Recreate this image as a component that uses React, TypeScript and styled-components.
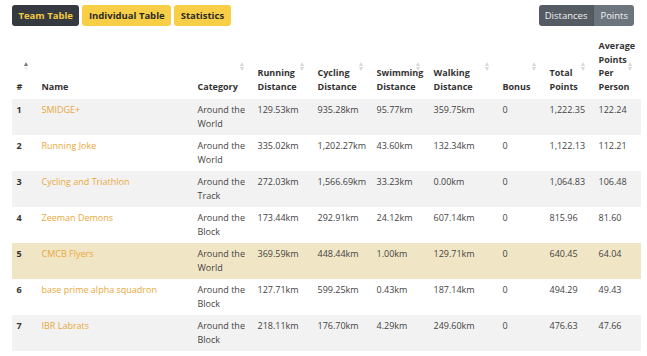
import React from "react";
import styled, { createGlobalStyle } from "styled-components";

const Global = createGlobalStyle`
  html, body { margin: 0; padding: 0; background: #fff; }
  body { font-family: "Open Sans", "Liberation Sans", sans-serif; color: #333; overflow: hidden; }
`;

const Page = styled.div`
  width: 647px;
  height: 356px;
  overflow: hidden;
  padding: 4px 0 0 12px;
  box-sizing: border-box;
`;

const Toolbar = styled.div`
  display: flex;
  justify-content: space-between;
  align-items: center;
  padding-right: 13px;
  height: 22px;
`;

const Group = styled.div`
  display: flex;
  gap: 3px;
`;

const TabButton = styled.button<{ $active?: boolean }>`
  height: 21px;
  padding: 0 6.5px;
  border: none;
  border-radius: 3px;
  font-family: "Open Sans", sans-serif;
  font-weight: 700;
  font-size: 9.5px;
  background: ${(p) => (p.$active ? "#343a40" : "#f7ce46")};
  color: ${(p) => (p.$active ? "#f3c944" : "#2b2b2b")};
  cursor: pointer;
`;

const Segmented = styled.div`
  display: flex;
  border-radius: 3px;
  overflow: hidden;
`;

const SegButton = styled.button<{ $active?: boolean }>`
  height: 21px;
  padding: 0 6px;
  border: none;
  font-family: "Open Sans", sans-serif;
  font-size: 9.5px;
  background: ${(p) => (p.$active ? "#545b62" : "#6c757d")};
  color: #f1f1f1;
  & + & { border-left: 1px solid #4e555b; }
`;

const Table = styled.table`
  margin-top: 8px;
  width: 629px;
  table-layout: fixed;
  border-collapse: collapse;
  font-size: 9px;
  line-height: 13.5px;
`;

const Col = styled.col<{ $w: number }>`
  width: ${(p) => p.$w}px;
`;

const Th = styled.th`
  position: relative;
  text-align: left;
  vertical-align: bottom;
  font-weight: 700;
  color: #333;
  padding: 5px 12px 5.5px 4.5px;
`;

const SortIcon = styled.span<{ $asc?: boolean }>`
  position: absolute;
  right: 8px;
  top: 50%;
  transform: translateY(-50%);
  width: 6px;
  height: 10px;
  display: flex;
  flex-direction: column;
  align-items: center;
  justify-content: center;
  gap: 1px;
  &::before, &::after {
    content: "";
    width: 0;
    height: 0;
    border-left: 2.5px solid transparent;
    border-right: 2.5px solid transparent;
  }
  &::before {
    border-bottom: 4px solid ${(p) => (p.$asc ? "#777" : "#d8d8d8")};
  }
  &::after {
    border-top: 4px solid ${(p) => (p.$asc ? "#eee" : "#d8d8d8")};
  }
`;

const Tr = styled.tr<{ $stripe?: boolean; $highlight?: boolean }>`
  background: ${(p) => (p.$highlight ? "#f0e6c6" : p.$stripe ? "#f2f2f2" : "#fff")};
`;

const Td = styled.td`
  vertical-align: top;
  padding: 4.5px 4.5px;
  height: 27px;
  color: #444;
`;

const RankCell = styled(Td)`
  font-weight: 700;
  color: #333;
`;

const NameLink = styled.a`
  color: #e9a83a;
  text-decoration: none;
`;

const columns: { label: React.ReactNode; w: number; asc?: boolean; sortable?: boolean }[] = [
  { label: "#", w: 25, asc: true, sortable: true },
  { label: "Name", w: 156, sortable: false },
  { label: "Category", w: 60, sortable: true },
  { label: <>Running<br />Distance</>, w: 60, sortable: true },
  { label: <>Cycling<br />Distance</>, w: 59, sortable: true },
  { label: <>Swimming<br />Distance</>, w: 57, sortable: true },
  { label: <>Walking<br />Distance</>, w: 69, sortable: true },
  { label: "Bonus", w: 47, sortable: true },
  { label: <>Total<br />Points</>, w: 49, sortable: true },
  { label: <>Average<br />Points<br />Per<br />Person</>, w: 47, sortable: true },
];

const rows = [
  ["1", "SMIDGE+", "World", "129.53km", "935.28km", "95.77km", "359.75km", "0", "1,222.35", "122.24"],
  ["2", "Running Joke", "World", "335.02km", "1,202.27km", "43.60km", "132.34km", "0", "1,122.13", "112.21"],
  ["3", "Cycling and Triathlon", "Track", "272.03km", "1,566.69km", "33.23km", "0.00km", "0", "1,064.83", "106.48"],
  ["4", "Zeeman Demons", "Block", "173.44km", "292.91km", "24.12km", "607.14km", "0", "815.96", "81.60"],
  ["5", "CMCB Flyers", "World", "369.59km", "448.44km", "1.00km", "129.71km", "0", "640.45", "64.04"],
  ["6", "base prime alpha squadron", "Block", "127.71km", "599.25km", "0.43km", "187.14km", "0", "494.29", "49.43"],
  ["7", "IBR Labrats", "Block", "218.11km", "176.70km", "4.29km", "249.60km", "0", "476.63", "47.66"],
];

export default function App() {
  return (
    <Page>
      <Global />
      <Toolbar>
        <Group>
          <TabButton $active>Team Table</TabButton>
          <TabButton>Individual Table</TabButton>
          <TabButton>Statistics</TabButton>
        </Group>
        <Segmented>
          <SegButton $active>Distances</SegButton>
          <SegButton>Points</SegButton>
        </Segmented>
      </Toolbar>
      <Table>
        <colgroup>
          {columns.map((c, i) => (
            <Col key={i} $w={c.w} />
          ))}
        </colgroup>
        <thead>
          <tr>
            {columns.map((c, i) => (
              <Th key={i}>
                {c.label}
                {c.sortable && <SortIcon $asc={c.asc} />}
              </Th>
            ))}
          </tr>
        </thead>
        <tbody>
          {rows.map((r, i) => (
            <Tr key={r[0]} $stripe={i % 2 === 0} $highlight={r[0] === "5"}>
              <RankCell>{r[0]}</RankCell>
              <Td>
                <NameLink href="#">{r[1]}</NameLink>
              </Td>
              <Td>
                Around the
                <br />
                {r[2]}
              </Td>
              {r.slice(3).map((v, j) => (
                <Td key={j}>{v}</Td>
              ))}
            </Tr>
          ))}
        </tbody>
      </Table>
    </Page>
  );
}
